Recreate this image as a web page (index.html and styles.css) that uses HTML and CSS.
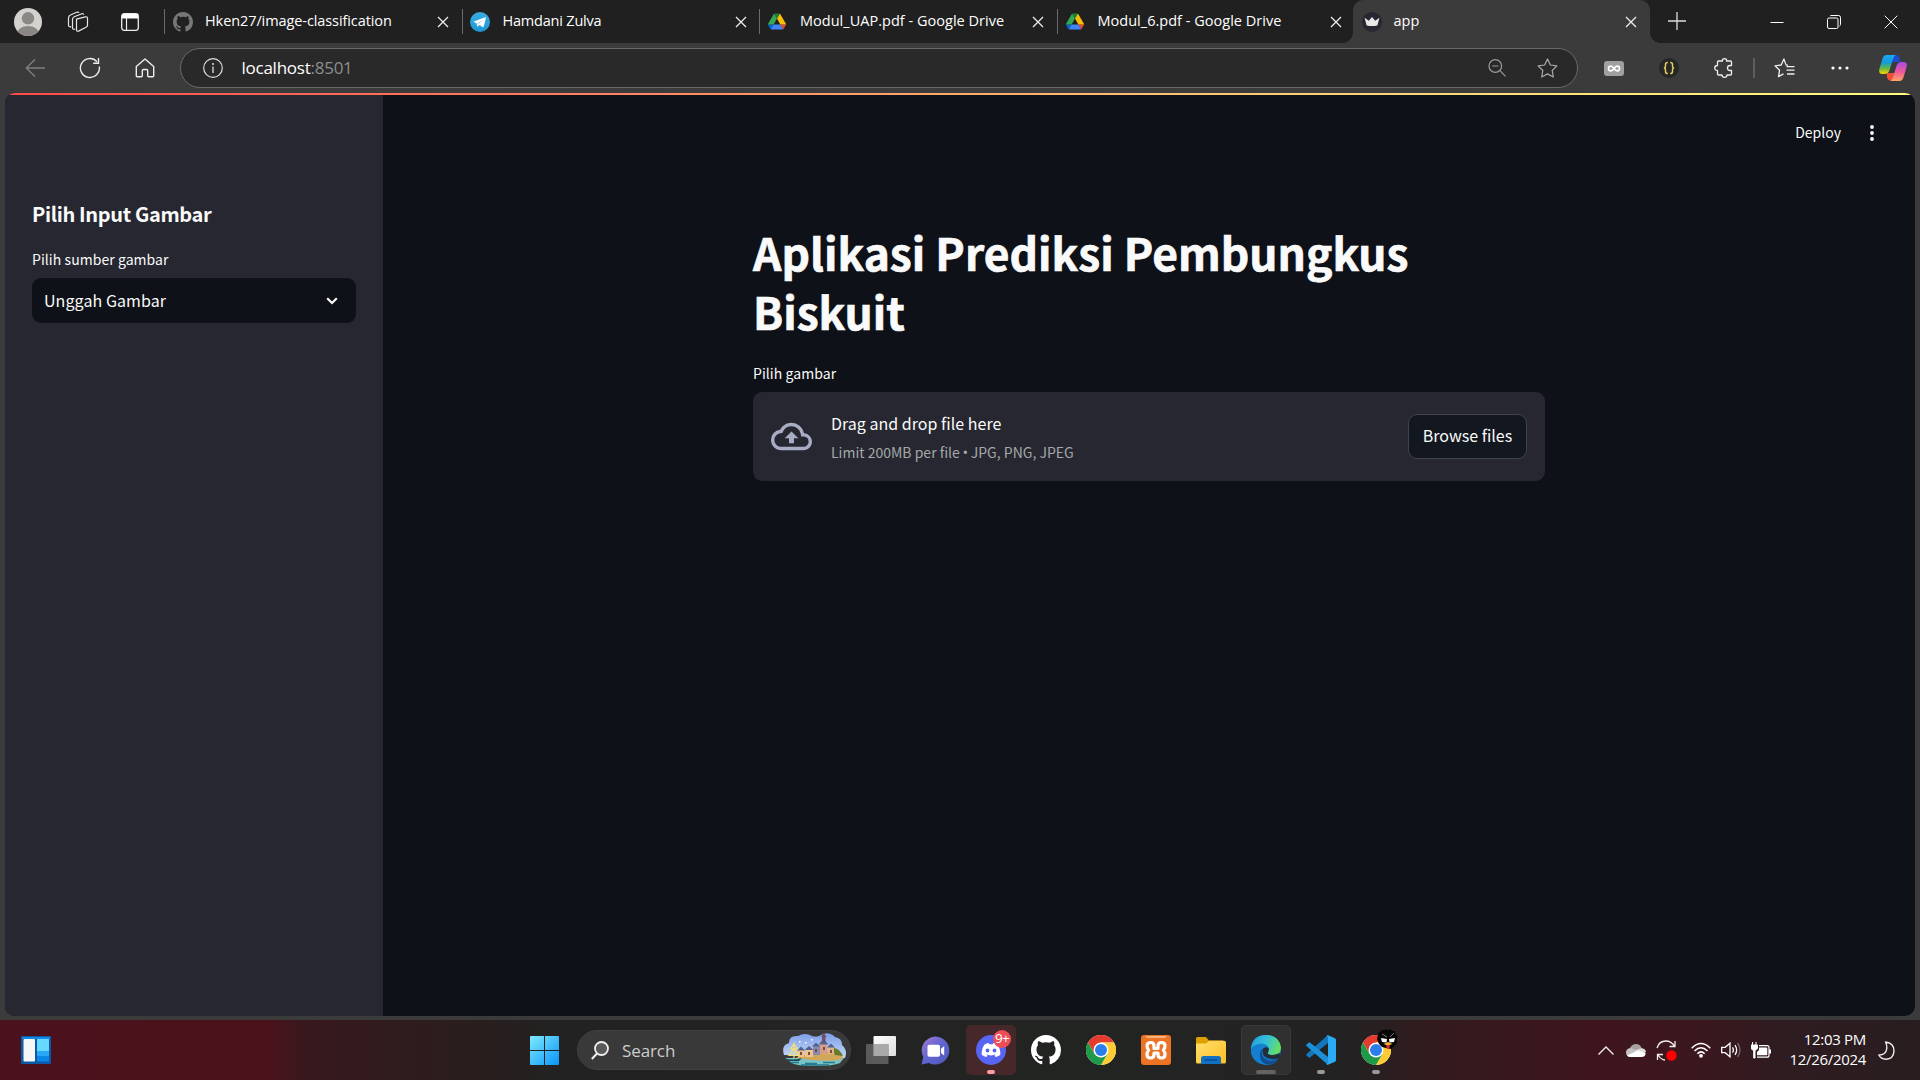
FILE: index.html
```html
<!DOCTYPE html>
<html lang="id">
<head>
<meta charset="utf-8">
<title>app</title>
<link rel="stylesheet" href="styles.css">
</head>
<body>
<svg class="defs" width="0" height="0" aria-hidden="true">
  <defs>
    <symbol id="close" viewBox="0 0 12 12"><path d="M1 1l10 10M11 1L1 11" fill="none" stroke="#eee" stroke-width="1.3"/></symbol>
    <symbol id="github" viewBox="0 0 16 16"><path fill="currentColor" d="M8 0C3.58 0 0 3.58 0 8c0 3.54 2.29 6.53 5.47 7.59.4.07.55-.17.55-.38 0-.19-.01-.82-.01-1.49-2.01.37-2.53-.49-2.69-.94-.09-.23-.48-.94-.82-1.13-.28-.15-.68-.52-.01-.53.63-.01 1.08.58 1.23.82.72 1.21 1.87.87 2.33.66.07-.52.28-.87.51-1.07-1.78-.2-3.64-.89-3.64-3.95 0-.87.31-1.59.82-2.15-.08-.2-.36-1.02.08-2.12 0 0 .67-.21 2.2.82A7.65 7.65 0 018 3.87c.68 0 1.36.09 2 .27 1.53-1.04 2.2-.82 2.2-.82.44 1.1.16 1.92.08 2.12.51.56.82 1.27.82 2.15 0 3.07-1.87 3.75-3.65 3.95.29.25.54.73.54 1.48 0 1.07-.01 1.93-.01 2.2 0 .21.15.46.55.38A8.01 8.01 0 0016 8c0-4.42-3.58-8-8-8z"/></symbol>
    <symbol id="drive" viewBox="0 0 87.3 78"><path fill="#0066da" d="M6.6 66.85l3.85 6.65c.8 1.4 1.95 2.5 3.3 3.3L27.5 53H0c0 1.55.4 3.1 1.2 4.5z"/><path fill="#34a853" d="M43.65 25L29.9 1.2c-1.35.8-2.5 1.9-3.3 3.3L1.2 48.5A9 9 0 000 53h27.5z"/><path fill="#ea4335" d="M73.55 76.8c1.35-.8 2.5-1.9 3.3-3.3l1.6-2.75L86.1 57.5c.8-1.4 1.2-2.95 1.2-4.5H59.8l5.85 11.5z"/><path fill="#188038" d="M43.65 25L57.4 1.2C56.05.4 54.5 0 52.9 0H34.4c-1.6 0-3.15.45-4.5 1.2z"/><path fill="#4285f4" d="M59.8 53H27.5L13.75 76.8c1.35.8 2.9 1.2 4.5 1.2h50.8c1.6 0 3.15-.45 4.5-1.2z"/><path fill="#fbbc04" d="M73.4 26.5L60.7 4.5c-.8-1.4-1.95-2.5-3.3-3.3L43.65 25 59.8 53h27.45c0-1.55-.4-3.1-1.2-4.5z"/></symbol>
    <symbol id="chrome" viewBox="0 0 48 48"><circle cx="24" cy="24" r="24" fill="#fff"/><path fill="#e33b2e" d="M24 12h20.8A24 24 0 003.2 12l10.4 18z"/><path fill="#ffcd33" d="M34.4 30L24 48A24 24 0 0044.8 12H24z"/><path fill="#1e9a49" d="M13.6 30L3.2 12A24 24 0 0024 48l10.4-18z"/><circle cx="24" cy="24" r="12" fill="#fff"/><circle cx="24" cy="24" r="9.6" fill="#2b7de9"/></symbol>
    <linearGradient id="win" x1="0" y1="0" x2="1" y2="1"><stop offset="0" stop-color="#7eebff"/><stop offset="1" stop-color="#0a94f8"/></linearGradient>
    <linearGradient id="tele" x1="0" y1="0" x2="0" y2="1"><stop offset="0" stop-color="#37aee2"/><stop offset="1" stop-color="#1e96d4"/></linearGradient>
    <linearGradient id="teams" x1="0" y1="0" x2="1" y2="1"><stop offset="0" stop-color="#a07ad0"/><stop offset=".5" stop-color="#6064cf"/><stop offset="1" stop-color="#5058b8"/></linearGradient>
    <linearGradient id="edgeA" x1="0" y1=".2" x2="1" y2=".5"><stop offset="0" stop-color="#249de0"/><stop offset=".5" stop-color="#35c1d8"/><stop offset="1" stop-color="#66e060"/></linearGradient>
    <linearGradient id="edgeB" x1="0" y1="0" x2="1" y2="1"><stop offset="0" stop-color="#1b9de2"/><stop offset="1" stop-color="#0f5cb4"/></linearGradient>
    <linearGradient id="cpA" x1="0" y1="0" x2="0" y2="1"><stop offset="0" stop-color="#18a8f6"/><stop offset=".4" stop-color="#149bd8"/><stop offset=".7" stop-color="#61b847"/><stop offset="1" stop-color="#ffd400"/></linearGradient>
    <linearGradient id="cpB" x1="0" y1="0" x2="0" y2="1"><stop offset="0" stop-color="#a34be8"/><stop offset=".5" stop-color="#f0569c"/><stop offset="1" stop-color="#ffa75e"/></linearGradient>
    <linearGradient id="sky" x1="0" y1="0" x2="0" y2="1"><stop offset="0" stop-color="#7d9eea"/><stop offset="1" stop-color="#c4daf7"/></linearGradient>
    <linearGradient id="folder" x1="0" y1="0" x2="1" y2="1"><stop offset="0" stop-color="#ffdf70"/><stop offset="1" stop-color="#ffbf20"/></linearGradient>
    <linearGradient id="tv" x1="0" y1="0" x2="1" y2="1"><stop offset="0" stop-color="#fff"/><stop offset="1" stop-color="#ddd"/></linearGradient>
  </defs>
</svg>
<div class="screen">
  <header class="tabstrip">
    <div class="strip-tools">
      <svg width="28" height="28" viewBox="0 0 28 28"><defs><clipPath id="av"><circle cx="14" cy="14" r="14"/></clipPath></defs><circle cx="14" cy="14" r="14" fill="#d4d2cf"/><g clip-path="url(#av)" fill="#8b8784"><circle cx="14" cy="10.3" r="6.2"/><ellipse cx="14" cy="26" rx="11" ry="8"/></g></svg>
      <svg class="workspaces" width="22" height="22" viewBox="0 0 22 22" fill="none" stroke="#e6e6e6" stroke-width="1.2" stroke-linejoin="round"><path d="M9.5 8.2l8.7-2.4q2.3-.4 2.3 1.5v7q0 1.4-1.5 2l-7.500 3.800q-2 .7-2-1.400z"/><path d="M8.200 18q-2.700.9-2.700-1.400V8.500q0-2 1.800-2.700l7.500-3.100q1.600-.5 1.900.9"/><path d="M4.300 15.600Q1.500 16.400 1.500 14V7q0-2.200 2-3L9.600 1.300q1.800-.6 2.400.5"/></svg>
      <svg class="vtabs" width="18" height="18" viewBox="0 0 18 18"><rect x=".7" y=".7" width="16.600" height="16.600" rx="2.500" fill="none" stroke="#eee" stroke-width="1.300"/><path d="M1 1h16v4.500H1z" fill="#fff"/><path d="M5.500 5v12" stroke="#eee" stroke-width="1.200"/></svg>
    </div>
    <div class="tab"><svg class="fav gray" width="20" height="20"><use href="#github"/></svg><span class="tab-title t1">Hken27/image-classification</span><svg class="x" width="12" height="12"><use href="#close"/></svg></div>
    <div class="tab"><svg class="fav" width="20" height="20" viewBox="0 0 20 20"><circle cx="10" cy="10" r="10" fill="url(#tele)"/><path d="M3.300 9.700L15 5.300q1-.2.8.9l-2 8.400q-.4 1-1.300.5L9.500 13l-1.600 1.600q-.7.300-.8-.5L6.400 11.300z" fill="#fff"/><path d="M7.200 11.300l6-4-4.500 5-.8 2z" fill="#b8dcef"/></svg><span class="tab-title t2">Hamdani Zulva</span><svg class="x" width="12" height="12"><use href="#close"/></svg></div>
    <div class="tab"><svg class="fav drive" width="18" height="17"><use href="#drive"/></svg><span class="tab-title t3">Modul_UAP.pdf - Google Drive</span><svg class="x" width="12" height="12"><use href="#close"/></svg></div>
    <div class="tab"><svg class="fav drive" width="18" height="17"><use href="#drive"/></svg><span class="tab-title t4">Modul_6.pdf - Google Drive</span><svg class="x" width="12" height="12"><use href="#close"/></svg></div>
    <div class="tab active"><svg class="fav" width="20" height="20" viewBox="0 0 20 20"><circle cx="10" cy="10" r="10" fill="#262730"/><path d="M2.500 5.800l4.300 2.900L10 5l3.200 3.700 4.300-2.900-2.200 7.700q-5.300 1-10.600 0z" fill="#e8e8e8"/></svg><span class="tab-title t5">app</span><svg class="x" width="12" height="12"><use href="#close"/></svg></div>
    <svg class="newtab" width="18" height="18" viewBox="0 0 18 18"><path d="M9 0v18M0 9h18" stroke="#ddd" stroke-width="1.300"/></svg>
    <div class="window-controls">
      <svg width="14" height="14" viewBox="0 0 14 14"><path d="M.5 7.500h13" stroke="#fff"/></svg>
      <svg width="14" height="14" viewBox="0 0 14 14" fill="none" stroke="#fff"><rect x=".5" y="3" width="10.500" height="10.500" rx="1.500"/><path d="M3 1q.3-.5 1-.5h7.500q2 0 2 2v7q0 1-1 1.500"/></svg>
      <svg width="14" height="14" viewBox="0 0 14 14"><path d="M.7.7l12.600 12.600M13.300.7L.7 13.300" stroke="#fff"/></svg>
    </div>
  </header>

  <nav class="toolbar">
    <div class="nav-buttons">
      <span><svg width="20" height="18" viewBox="0 0 20 18" fill="none" stroke="#808080" stroke-width="1.300"><path d="M20 9H1.200M10 .5L1.200 9l8.800 8.500"/></svg></span>
      <span><svg width="22" height="22" viewBox="0 0 22 22" fill="none" stroke="#eee" stroke-width="1.400"><path d="M20.300 9.500A9.500 9.500 0 1 1 18 4.700M19.500 1v5.300h-5.300"/></svg></span>
      <span><svg width="20" height="20" viewBox="0 0 20 20" fill="none" stroke="#eee" stroke-width="1.400" stroke-linejoin="round"><path d="M1.300 8.500L10 1l8.700 7.500v9.200q0 1-1 1h-4q-1 0-1-1v-5.200q0-1-1-1H8.300q-1 0-1 1v5.200q0 1-1 1h-4q-1 0-1-1z"/></svg></span>
    </div>
    <div class="address">
      <svg width="20" height="20" viewBox="0 0 20 20"><circle cx="10" cy="10" r="9.300" fill="none" stroke="#ddd" stroke-width="1.200"/><path d="M10 8.500V15" stroke="#ddd" stroke-width="1.300"/><circle cx="10" cy="6" r="1" fill="#ddd"/></svg>
      <span class="url">localhost<span class="port">:8501</span></span>
      <svg class="mag" width="18" height="18" viewBox="0 0 18 18" fill="none" stroke="#999" stroke-width="1.200"><circle cx="7.300" cy="7" r="6.300"/><path d="M4.200 7h6.200M12 11.700l5.500 5.600"/></svg>
      <svg width="21" height="20" viewBox="0 0 21 20" fill="none" stroke="#aaa" stroke-width="1.200" stroke-linejoin="round"><path d="M10.500 1l2.900 6 6.500.9-4.700 4.600 1.100 6.500-5.800-3.100L4.700 19l1.100-6.500L1.100 7.900 7.600 7z"/></svg>
    </div>
    <div class="extensions">
      <span><svg width="20" height="15" viewBox="0 0 20 15"><rect width="20" height="15" rx="3" fill="#a0a0a0"/><path d="M10 7.500C8.800 5.700 8 5.100 6.900 5.100a2.400 2.400 0 000 4.800c1.100 0 1.900-.6 3.100-2.400 1.200-1.800 2-2.400 3.100-2.400a2.400 2.400 0 010 4.800c-1.100 0-1.900-.6-3.100-2.400z" fill="none" stroke="#fff" stroke-width="1.600"/></svg></span>
      <span><svg width="20" height="20" viewBox="0 0 20 20"><circle cx="10" cy="10" r="10" fill="#272727"/><path d="M8.800 4.500q-2.300 0-2.300 1.800v1.900q0 1.500-1.500 1.800 1.500.3 1.500 1.800v1.900q0 1.800 2.300 1.800M11.200 4.500q2.300 0 2.300 1.800v1.900q0 1.500 1.500 1.800-1.500.3-1.500 1.800v1.900q0 1.800-2.300 1.800" fill="none" stroke="#e3cf5b" stroke-width="1.500"/></svg></span>
      <span><svg width="20" height="20" viewBox="0 0 20 20" fill="none" stroke="#eee" stroke-width="1.300" stroke-linejoin="round"><path d="M4.500 3h4q-.5-2.300 2-2.300T12.500 3h4q1 0 1 1v3.500h-1.500a2.500 2.500 0 000 5h1.500V16q0 1-1 1h-3.500q0 2.300-2.500 2.300T8 17H4.500q-1 0-1-1v-3.500Q.7 12.500.7 10t2.800-2.500V4q0-1 1-1z"/></svg></span>
      <i></i>
      <span><svg width="21" height="20" viewBox="0 0 21 20" fill="none" stroke="#eee" stroke-width="1.300" stroke-linejoin="round"><path d="M14 7.300l-2-.4L9.900 1 7.200 7 1 7.800l4.600 4.400L4.500 18.600l5-2.700M12.500 8.700h8M12.500 12.200h8M13 16h7.500"/></svg></span>
      <span><svg width="18" height="4" viewBox="0 0 18 4" fill="#fff"><circle cx="2" cy="2" r="1.600"/><circle cx="9" cy="2" r="1.600"/><circle cx="16" cy="2" r="1.600"/></svg></span>
      <span class="copilot"><svg width="28" height="26" viewBox="0 0 28 26"><path d="M15 0h2q2.500 0 3.300 2.800L21.500 7h-5l-5 0z" fill="#1d4bd0"/><path d="M8 18h8l-3 7.500h-2q-2 0-3-3z" fill="#f04f35"/><path d="M7.500 0H17q-2 .5-3 4l-3.500 11q-1.200 4-5 4H3.300Q-.8 19 .4 14L3.400 4Q4.600 0 7.500 0z" fill="url(#cpA)"/><path d="M20.500 26H11q2-.5 3-4l3.500-11q1.200-4 5-4h2.200q4.100 0 2.900 5l-3 10q-1.200 4-4.100 4z" fill="url(#cpB)"/></svg></span>
    </div>
  </nav>

  <div class="viewport">
    <aside class="sidebar">
      <h2>Pilih Input Gambar</h2>
      <label>Pilih sumber gambar</label>
      <div class="select"><span>Unggah Gambar</span><svg width="12" height="8" viewBox="0 0 12 8"><path d="M1.200 1.200L6 6l4.800-4.800" fill="none" stroke="#fafafa" stroke-width="2.200"/></svg></div>
    </aside>
    <main class="app">
      <div class="app-header"><span>Deploy</span><svg width="4" height="16" viewBox="0 0 4 16" fill="#fafafa"><circle cx="2" cy="2" r="1.900"/><circle cx="2" cy="8" r="1.900"/><circle cx="2" cy="14" r="1.900"/></svg></div>
      <section class="block">
        <h1>Aplikasi Prediksi Pembungkus Biskuit</h1>
        <label>Pilih gambar</label>
        <div class="uploader">
          <svg width="41" height="41" viewBox="0 0 24 24" fill="#a9adc3"><path d="M19.350 10.040A7.490 7.490 0 0012 4C9.110 4 6.600 5.640 5.350 8.040A5.994 5.994 0 000 14c0 3.310 2.690 6 6 6h13c2.760 0 5-2.240 5-5 0-2.640-2.050-4.780-4.650-4.960zM19 18H6c-2.210 0-4-1.790-4-4 0-2.050 1.530-3.760 3.560-3.970l1.070-.11.5-.95A5.469 5.469 0 0112 6c2.620 0 4.880 1.860 5.390 4.430l.3 1.500 1.530.11A2.980 2.980 0 0122 15c0 1.650-1.350 3-3 3zM8 13h2.550v3h2.900v-3H16l-4-4z"/></svg>
          <div class="drop"><p>Drag and drop file here</p><small>Limit 200MB per file <i class="bullet">•</i> JPG, PNG, JPEG</small></div>
          <button>Browse files</button>
        </div>
      </section>
    </main>
  </div>

  <footer class="taskbar">
    <div class="widgets"><svg width="30" height="28" viewBox="0 0 30 28"><rect width="30" height="28" rx="1" fill="#0c59a8"/><path d="M1 1h28v2H1z" fill="#1688df"/><rect x="2.500" y="3" width="11.500" height="22.500" rx="1" fill="#f6f6f6"/><path d="M16 3h12v12H16z" fill="#67d8ff"/><path d="M16 15h12v5H16z" fill="#28a8f7"/><path d="M16 20h12v5.500H16z" fill="#0a86e6"/></svg></div>
    <div class="dock">
      <span class="tile"><svg width="29" height="29" viewBox="0 0 29 29"><path d="M1 0h13v14H0V1q0-1 1-1zM15 0h13q1 0 1 1v13H15zM0 15h14v14H1q-1 0-1-1zM15 15h14v13q0 1-1 1H15z" fill="url(#win)"/></svg></span>
      <div class="search">
        <svg width="18" height="19" viewBox="0 0 18 19"><circle cx="10.500" cy="7.500" r="6.500" fill="#5a5a5a" stroke="#f0f0f0" stroke-width="1.800"/><path d="M6 12.500L.8 18" stroke="#f0f0f0" stroke-width="2"/></svg>
        <span>Search</span>
        <svg class="scene" width="64" height="33" viewBox="0 0 64 33"><path d="M1 22Q-2 12 6 10q0-8 9-7 7-4 14 0 4 1 7 0 9-6 16 1 7 1 7 8 6 5 3 13z" fill="url(#sky)"/><path d="M2 25h59l-4 5q-6 3-25 3T9 30z" fill="#78c3c5"/><path d="M8 29.500h8M22 30.500h12M40 29.500h12M18 32h28" stroke="#267b8e" stroke-width="1.300"/><path d="M13 25q3-3 14-4l13-2 12-3q7 4 8 9l-4 2q-20 2-43-2z" fill="#d3a75a"/><path d="M49 15q7-1 11 8l-8-1z" fill="#657c2d"/><path d="M15 17.500l3-2.500 3 2.500V24h-6zM22 17l4-3 4 3v7h-8z" fill="#efc48a"/><path d="M30 13l3-3 4 3v9h-7z" fill="#8a89b0"/><path d="M37 11h7v10h-7z" fill="#d99c85"/><path d="M45 14h6v7h-6z" fill="#e0b28c"/><path d="M29 13.500l4-4 4 4zM35.500 11.500l5-5.500 5 5.500zM44 14.500l4-4 4 4zM14 17.500l4-4 4 4zM21.500 17l4.500-4 4.500 4z" fill="#536391"/><path d="M39 2h3.500v7H39zM38 4l2.800-4 2.800 4z" fill="#74506a"/><path d="M32 16h2v3h-2zM40 14h2v3h-2zM47 17h2v3h-2zM25 19h2v3h-2zM17 19h2v3h-2z" fill="#7f4a3b"/><path d="M11 9.500v16M11 11l-3.500 5h7zM11 15l-5 7.500h10z" fill="none" stroke="#f6df73" stroke-width="1.200"/><path d="M1 25q8 3 18 0l-3 3H6z" fill="#174457"/><path d="M16 8h1.500v1.500H16zM28 6h1.500v1.500H28zM22 9h1.500v1.500H22z" fill="#fff"/></svg>
      </div>
      <span class="tile"><svg width="30" height="28" viewBox="0 0 30 28"><rect x="7.500" width="22.500" height="20" rx="1" fill="url(#tv)"/><rect y="8" width="22.500" height="20" rx="1" fill="#666" fill-opacity=".82"/><path d="M7.500 8h15v12h-15z" fill="#a9a9a9"/></svg></span>
      <span class="tile teams"><svg width="29" height="29" viewBox="0 0 29 29"><path d="M14.500.5a14 14 0 11-6.700 26.400L.5 28.500 2.300 21A14 14 0 0114.500.5z" fill="url(#teams)"/><rect x="6.500" y="8.700" width="12.500" height="12" rx="1.700" fill="#fff"/><path d="M20 12.700l3.200-2.700v9.500L20 17z" fill="#fff"/></svg></span>
      <span class="tile attention"><svg width="30" height="30" viewBox="0 0 30 30"><circle cx="15" cy="15" r="15" fill="#5865f2"/><path d="M8.500 9.500q2-1.300 4.200-1.500l.6 1.200h3.400l.6-1.200q2.200.2 4.200 1.500 3.300 4.800 2.800 10.200-2.200 1.800-4.800 2.300l-1-1.800q1-.4 1.700-.9-5.200 2.200-10.400 0 .7.500 1.700.9l-1 1.800q-2.600-.5-4.800-2.300Q5.200 14.300 8.500 9.500z" fill="#fff"/><ellipse cx="11.500" cy="15.500" rx="1.900" ry="2.100" fill="#5865f2"/><ellipse cx="18.500" cy="15.500" rx="1.900" ry="2.100" fill="#5865f2"/></svg><b class="badge">9+</b><em class="dot"></em></span>
      <span class="tile white"><svg width="30" height="30"><use href="#github"/></svg></span>
      <span class="tile"><svg width="30" height="30"><use href="#chrome"/></svg></span>
      <span class="tile"><svg width="30" height="30" viewBox="0 0 30 30"><rect width="30" height="30" rx="3" fill="#ed7324"/><path d="M4 1h22l-2 2H6z" fill="#f7b080"/><path d="M10 7.500q-4 0-4 3.500 0 2.200 1.600 4Q6 16.800 6 19.500 6 23 9.500 23t3.500-3.500V18h4v1.500q0 3.500 3.500 3.500t3.500-3.500q0-2.700-1.600-4.500Q24 13.200 24 11q0-3.500-3.500-3.500T17 11v2.500h-4V11q0-3.500-3-3.500z" fill="none" stroke="#fff" stroke-width="3.200" stroke-linejoin="round" stroke-linecap="round"/></svg></span>
      <span class="tile"><svg width="30" height="27" viewBox="0 0 30 27"><path d="M0 1.500Q0 0 1.500 0H10l3 3.500h14V10H0z" fill="#dda000"/><path d="M0 6.500h10L13.500 3.800H28q2 0 2 2V25q0 1.500-1.500 1.500h-27Q0 26.500 0 25z" fill="url(#folder)"/><path d="M5 27v-5.500Q5 19 7.500 19h15q2.500 0 2.500 2.500V27z" fill="#1271c2"/><path d="M8.500 23h13" stroke="#07468a" stroke-width="1.200"/></svg></span>
      <span class="tile current"><svg width="30" height="30" viewBox="0 0 30 30"><circle cx="15" cy="15" r="15" fill="url(#edgeB)"/><path d="M12 11.500q-6 7 0 14 5 5 14.500.6Q22 30 16 30 0 28 0 15 2 6 12 11.500z" fill="#147fd1"/><path d="M12.500 13q-4 8 3 12 6 2.500 12-1.500-3 5-9 6.200Q8 29 9 19q.5-4 3.500-6z" fill="#124d91"/><path d="M0 14Q1 0 15 0q13 0 15 12.500 0 7.500-8 7.500-6.500-.2-5-3 2-2 .3-5Q15 8 9.500 8.500 2 9.500 0 14z" fill="url(#edgeA)"/><path d="M17.500 13q-2.500-1.500-5 0-2 4 .5 8 6 5 15.500 2Q30 21 28 18.300q-4 2.200-8 1.700-4-.6-3-3 1.200-1.500.5-4z" fill="#252e38"/></svg><em class="dot wide"></em></span>
      <span class="tile"><svg width="30" height="30" viewBox="0 0 30 30"><path d="M22 0v8L4 22.500q-.8.500-1.500-.2L.5 20.600q-.8-.8 0-1.600z" fill="#1277bd"/><path d="M22 30v-8L4 7.500q-.8-.5-1.500.2L.5 9.400q-.8.800 0 1.600z" fill="#1b8fd8"/><path d="M22 .2l7 3.100q1 .5 1 1.700v20q0 1.200-1 1.700l-7 3.100q-.8.200-1.500-.5L22 27.500v-25L20.500.7q.7-.7 1.500-.5z" fill="#2baaf5"/></svg><em class="dot gray"></em></span>
      <span class="tile"><svg width="30" height="30"><use href="#chrome"/></svg><svg class="profile" width="21" height="21" viewBox="0 0 21 21"><path d="M2 3l2-.5L5 .5l2 1 2-1.500 2 1.500L14 0l1 2 3 0 .5 3 2 2-1 4 .5 3-3 3-3 3-5-1-4-1-3-3-2-5L1 6z" fill="#050505"/><path d="M4 9l6 1-.5 3.500-4.500-.5zM12 10l6-1-1 4-4.500.5z" fill="#fff"/><path d="M6.500 15l4.500-2 4.500 2-4.500 1.500z" fill="#efb72f"/><path d="M9 16h4l-1 4h-2z" fill="#dc2c35"/><path d="M5 5l5 3M17 4l-4 4" stroke="#777"/></svg><em class="dot gray"></em></span>
    </div>
    <div class="tray">
      <svg class="up" width="16" height="9" viewBox="0 0 16 9"><path d="M.5 8.500L8 1l7.500 7.500" fill="none" stroke="#eee" stroke-width="1.400"/></svg>
      <svg class="cloud" width="20" height="13" viewBox="0 0 20 13"><path d="M4 4q2-4 6-4 4 .2 5.500 4L11 7 4 6z" fill="#a9a0a2"/><path d="M0 8.500Q0 4.500 4.500 4L13 7l-8 5.500Q0 13 0 8.500z" fill="#c7c0c2"/><path d="M9 6.500L15.500 4Q20 5 20 8l-4 2z" fill="#ddd"/><path d="M1 11.500L11.500 6.500 19.600 9q0 4-4.100 4h-11Q2 13 1 11.500z" fill="#fff"/></svg>
      <svg class="sync" width="21" height="21" viewBox="0 0 21 21" fill="none" stroke="#eee" stroke-width="1.300"><path d="M1 8Q3 1 10 1q5 0 9 5.500M19 1v5.500h-5.500M9 20q-4-.2-7-5M1.500 20v-5.500H7"/><circle cx="15.500" cy="15.500" r="5.200" fill="#f00" stroke="none"/></svg>
      <svg class="wifi" width="20" height="16" viewBox="0 0 20 16" fill="none" stroke="#fff" stroke-width="1.500"><path d="M.7 6.200q9.300-9.300 18.600 0M3.500 9q6.500-6.500 13 0M6.300 11.700q3.700-3.700 7.400 0"/><circle cx="10" cy="13.800" r="1.900" fill="#fff" stroke="none"/></svg>
      <svg class="volume" width="20" height="16" viewBox="0 0 20 16" fill="none" stroke="#fff" stroke-width="1.300"><path d="M.7 5.300h3.500L9 1.200v13.600l-4.800-4.100H.7zM11.500 5.300q1.800 2.700 0 5.400M14 3.200q3.300 4.800 0 9.600"/><path d="M16.500 1q5 7 0 14" stroke="#77656a"/></svg>
      <svg class="battery" width="20" height="17" viewBox="0 0 20 17"><path d="M1.500 0v3M5 0v3M0 3h6.500v3q-.5 2-2.500 2.300V16H2.700V8.300Q.5 8 0 6z" fill="#fff" stroke="#fff"/><path d="M8 3.700h8q2 0 2 2v7.500q0 2-2 2H6" fill="none" stroke="#fff" stroke-width="1.200"/><path d="M8 5.500h7.500q.8 0 .8.800v6.200q0 .8-.8.800H6V10l2-2z" fill="#fff"/><path d="M18 7.500h2v4h-2z" fill="#fff"/></svg>
      <div class="clock"><span class="time">12:03 PM</span><span class="date">12/26/2024</span></div>
      <svg class="moon" width="17" height="19" viewBox="0 0 17 19"><path d="M7.500 1Q16 2 16 10q-.5 8-8 8.200-5 0-7.200-4.200Q8 14 8.800 7.500 9 3.500 7.500 1z" fill="none" stroke="#eee" stroke-width="1.400" stroke-linejoin="round"/></svg>
    </div>
  </footer>
</div>
</body>
</html>
```
FILE: styles.css
```css
* { box-sizing: border-box; }
body { margin: 0; background: #3b3b3b; color: #fff; font-family: "Open Sans", "Noto Sans", sans-serif; overflow: hidden; }
svg { display: block; flex: none; }
.defs { position: absolute; }
h1, h2, p { margin: 0; }
.screen { width: 1920px; height: 1080px; display: flex; flex-direction: column; }

/* tab strip */
.tabstrip { height: 43px; background: #202020; display: flex; align-items: center; }
.strip-tools { width: 164px; display: flex; align-items: center; padding: 0 0 0 14px; flex: none; }
.workspaces { margin-left: 25px; }
.vtabs { margin-left: 32px; }
.tab { width: 297.5px; height: 43px; flex: none; display: flex; align-items: center; padding: 0 12.500px 0 8px; background: linear-gradient(#6a6a6a, #6a6a6a) 0 9px / 1px 25px no-repeat; }
.fav { margin-right: 13px; }
.fav.gray { color: #777; margin: 0 12px 0 1px; }
.fav.drive { margin: 0 14px 0 1px; }
.tab-title { font-size: 14.5px; line-height: 20px; white-space: nowrap; margin-top: -2px; }
.tab .x { margin-left: auto; }
.t1 { letter-spacing: -.09px; }
.t2 { letter-spacing: -.2px; }
.t3, .t4 { letter-spacing: .02px; }
.tab.active { background: #3b3b3b; border-radius: 10px 10px 0 0; position: relative; margin-left: -1.500px; padding: 0 13.500px 0 9px; }
.tab.active::before, .tab.active::after { content: ""; position: absolute; bottom: 0; width: 10px; height: 10px; }
.tab.active::before { left: -10px; background: radial-gradient(circle at 0 0, #202020 9.500px, #3b3b3b 10px); }
.tab.active::after { right: -10px; background: radial-gradient(circle at 100% 0, #202020 9.500px, #3b3b3b 10px); }
.tab.active .fav { margin-right: 12px; }
.newtab { margin: -2px 0 0 18px; }
.window-controls { margin-left: auto; padding-right: 22px; display: flex; gap: 43px; }

/* toolbar */
.toolbar { height: 50px; display: flex; align-items: center; padding-left: 7px; }
.nav-buttons, .extensions { display: flex; align-items: center; }
.nav-buttons span, .extensions span { width: 55px; display: flex; justify-content: center; }
.address { width: 1398px; height: 40px; margin-left: 8px; border: 1px solid #696969; border-radius: 20px; background: #292929; display: flex; align-items: center; padding: 0 19px 0 21.500px; }
.url { font-size: 17px; letter-spacing: -.25px; margin: -2px auto 0 19px; }
.port { color: #8e8e8e; }
.mag { margin-right: 31px; }
.extensions { padding-left: 8px; }
.extensions i { width: 2px; height: 20px; margin: 0 2px; background: #5e5e5e; }
.extensions .copilot { width: 52px; }

/* app */
.viewport { width: 1910px; height: 923px; margin-left: 5px; border-radius: 10px; overflow: hidden; background: #0e1117; display: flex; position: relative; font-family: "Noto Sans CJK SC", sans-serif; color: #fafafa; }
.viewport::before { content: ""; position: absolute; inset: 0 0 auto; height: 2px; background: linear-gradient(90deg, #ff4b4b, #ff8060 30%, #ffca75 65%, #fffd80); }
.sidebar { width: 378px; background: #262730; padding: 105px 27px 0; }
.sidebar h2 { font-size: 20px; line-height: 32px; font-weight: 700; letter-spacing: -.35px; }
label { display: block; font-size: 14px; line-height: 24px; letter-spacing: .06px; }
.sidebar label { margin-top: 17px; }
.select { height: 45px; margin-top: 7px; background: #0e1117; border-radius: 9px; display: flex; align-items: center; justify-content: space-between; padding: 0 18px 0 12px; font-size: 16px; line-height: 24px; }
.select span { margin-top: -2px; letter-spacing: .08px; }
.app { flex: 1; }
.app-header { height: 80px; display: flex; align-items: center; justify-content: flex-end; gap: 29px; padding: 0 41px 0 0; font-size: 14px; }
.app-header span { margin-top: -2px; }
.block { width: 792px; margin: 50px 0 0 370px; }
h1 { font-size: 44.300px; line-height: 59.400px; font-weight: 700; letter-spacing: .02px; -webkit-text-stroke: .7px #fafafa; }
.block label { margin-top: 19px; }
.uploader { height: 89px; margin-top: 7px; background: #262730; border-radius: 9px; display: flex; align-items: center; padding: 0 18px; }
.drop { margin-left: 19px; padding-top: 4px; }
.drop p { font-size: 16px; line-height: 29px; letter-spacing: .02px; }
.drop small { display: block; font-size: 14px; line-height: 29px; color: #a3a8a8; }
.bullet { font: 15px/1 "Open Sans", sans-serif; margin: 0 -.5px; }
button { margin-left: auto; width: 119px; height: 45px; padding: 0 0 2px; border: 1px solid #41434c; border-radius: 9px; background: #131720; color: #fafafa; font: 16px/24px "Noto Sans CJK SC", sans-serif; white-space: nowrap; }

/* taskbar */
.taskbar { height: 60px; margin-top: 4px; background: linear-gradient(90deg, #4b121d 0, #4b111b 265px, #38191d 305px, #291e1e 480px, #222 560px, #222422 1100px, #222 1340px, #321b1e 1430px, #3f151d 1600px, #3b171e 1700px, #2e1c20 1780px, #291d20); display: flex; align-items: center; }
.widgets { width: 519.500px; padding-left: 21px; }
.dock { display: flex; gap: 5px; align-items: center; }
.tile { width: 50px; height: 50px; border-radius: 5px; display: flex; align-items: center; justify-content: center; position: relative; }
.white { color: #fff; }
.teams { padding-right: 1px; }
.attention { background: #46272a; }
.current { background: #303030; border: 1px solid #383838; }
.dot { position: absolute; bottom: 1px; left: 21px; width: 8px; height: 4px; border-radius: 2px; background: #ff9ba5; }
.dot.gray { background: #999; }
.dot.wide { width: 20px; left: 14px; bottom: 0; background: #636363; }
.badge { position: absolute; left: 27px; top: 5px; width: 18px; height: 18px; border-radius: 9px; background: #ec4e58; font: 13.500px/17px "Open Sans", sans-serif; text-align: center; letter-spacing: -.6px; }
.profile { position: absolute; left: 26px; top: 4px; }
.search { width: 274px; height: 40px; margin: 0 0 0 2.500px; border-radius: 20px; background: #393939; border: 1px solid #404040; display: flex; align-items: center; padding: 0 3px 0 13px; font-size: 17px; color: #ccc; }
.search span { margin-left: 13px; letter-spacing: -.1px; }
.scene { margin-left: auto; margin-top: -2px; }
.tray { margin-left: auto; display: flex; align-items: center; padding-right: 25px; }
.cloud { margin-left: 12px; }
.sync { margin-left: 10px; }
.wifi { margin-left: 14px; }
.volume { margin-left: 10px; }
.battery { margin-left: 10px; }
.clock { width: 95px; text-align: right; font-size: 15px; line-height: 20px; margin-top: -3px; }
.clock span { display: block; white-space: nowrap; letter-spacing: -.3px; }
.moon { margin-left: 12px; }
```
